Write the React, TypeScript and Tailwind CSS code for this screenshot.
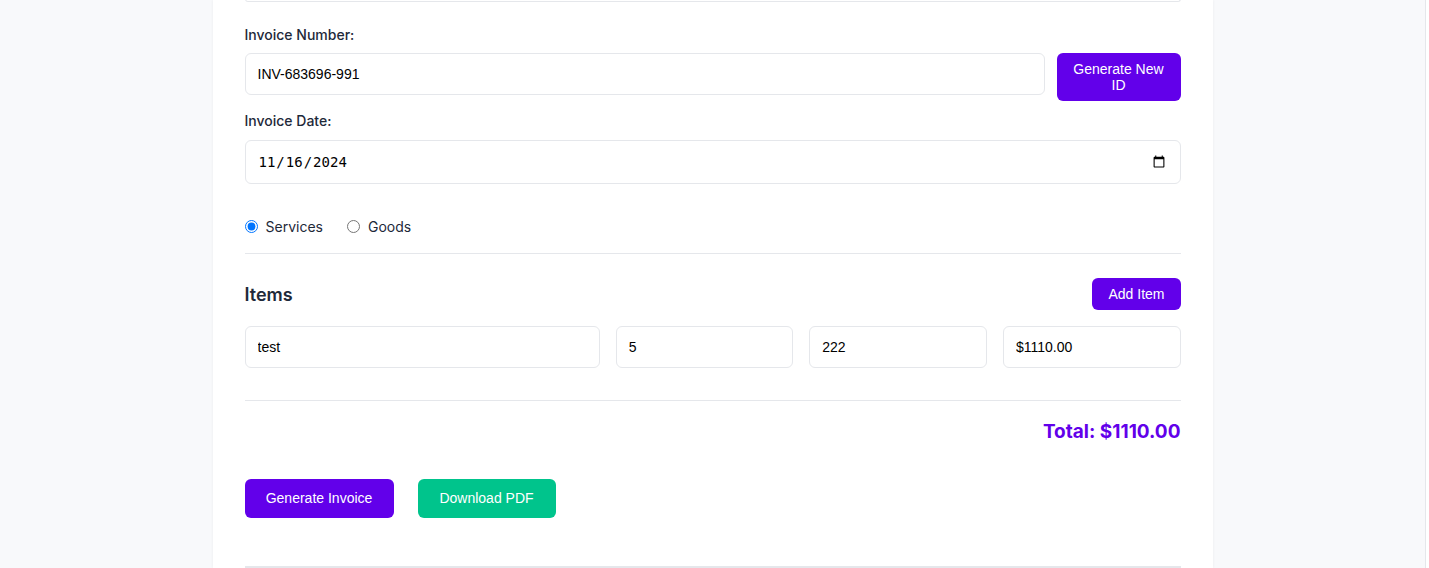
import { useState } from "react";

type Item = { description: string; quantity: string; price: string };

const inputClasses =
  "w-full rounded-md border border-gray-200 bg-white px-3 text-[14px] text-black outline-none font-['Liberation_Sans',Arial,sans-serif]";

function formatMoney(n: number): string {
  return `$${n.toFixed(2)}`;
}

export default function App() {
  const [invoiceNumber, setInvoiceNumber] = useState("INV-683696-991");
  const [invoiceDate, setInvoiceDate] = useState("2024-11-16");
  const [kind, setKind] = useState<"services" | "goods">("services");
  const [items, setItems] = useState<Item[]>([{ description: "test", quantity: "5", price: "222" }]);

  const total = items.reduce((sum, it) => sum + (Number(it.quantity) || 0) * (Number(it.price) || 0), 0);

  function updateItem(index: number, patch: Partial<Item>) {
    setItems((prev) => prev.map((it, i) => (i === index ? { ...it, ...patch } : it)));
  }

  function newId() {
    const a = Math.floor(100000 + Math.random() * 900000);
    const b = Math.floor(100 + Math.random() * 900);
    setInvoiceNumber(`INV-${a}-${b}`);
  }

  return (
    <div className="flex h-[568px] overflow-hidden font-['Inter',sans-serif]">
      <div className="flex flex-1 justify-center bg-[#f8f9fb]">
        <div className="w-[1000px] bg-white px-8 shadow-[0_0_3px_rgba(0,0,0,0.06)]">
          {/* tail of the field above */}
          <div className="-mt-px h-[3px] rounded-b-md border-x border-b border-gray-200" />

          {/* Invoice number */}
          <label className="mt-[23px] mb-2 block text-[14px] font-medium leading-5 text-gray-800">
            Invoice Number:
          </label>
          <div className="flex items-start gap-3">
            <input
              className={`${inputClasses} h-[42px]`}
              value={invoiceNumber}
              onChange={(e) => setInvoiceNumber(e.target.value)}
            />
            <button
              onClick={newId}
              className="h-12 w-[124px] shrink-0 rounded-md bg-[#6200ea] px-4 text-[14px] leading-4 text-white font-['Liberation_Sans',Arial,sans-serif]"
            >
              Generate New ID
            </button>
          </div>

          {/* Invoice date */}
          <label className="mt-[10px] mb-[9px] block text-[14px] font-medium leading-5 text-gray-800">
            Invoice Date:
          </label>
          <input
            type="date"
            className="h-[44px] w-full rounded-md border border-gray-200 bg-white px-3 text-[14px] text-black outline-none font-['DejaVu_Sans_Mono',monospace]"
            value={invoiceDate}
            onChange={(e) => setInvoiceDate(e.target.value)}
          />

          {/* Type */}
          <div className="mt-8 flex h-5 items-center gap-6 text-[14px] text-gray-800">
            <label className="flex items-center gap-2">
              <input
                type="radio"
                name="kind"
                className="m-0 h-[13px] w-[13px]"
                checked={kind === "services"}
                onChange={() => setKind("services")}
              />
              Services
            </label>
            <label className="flex items-center gap-2">
              <input
                type="radio"
                name="kind"
                className="m-0 h-[13px] w-[13px]"
                checked={kind === "goods"}
                onChange={() => setKind("goods")}
              />
              Goods
            </label>
          </div>

          <div className="mt-[17px] h-px bg-gray-200" />

          {/* Items */}
          <div className="mt-6 flex h-8 items-center justify-between">
            <h2 className="text-[18px] font-semibold text-gray-800">Items</h2>
            <button
              onClick={() => setItems((prev) => [...prev, { description: "", quantity: "", price: "" }])}
              className="h-8 rounded-md bg-[#6200ea] px-4 text-[14px] text-white font-['Liberation_Sans',Arial,sans-serif]"
            >
              Add Item
            </button>
          </div>

          <div className="mt-4 space-y-4">
            {items.map((it, i) => (
              <div key={i} className="grid grid-cols-[2fr_1fr_1fr_1fr] gap-4">
                <input
                  className={`${inputClasses} h-[42px]`}
                  value={it.description}
                  onChange={(e) => updateItem(i, { description: e.target.value })}
                />
                <input
                  className={`${inputClasses} h-[42px]`}
                  value={it.quantity}
                  onChange={(e) => updateItem(i, { quantity: e.target.value })}
                />
                <input
                  className={`${inputClasses} h-[42px]`}
                  value={it.price}
                  onChange={(e) => updateItem(i, { price: e.target.value })}
                />
                <input
                  className={`${inputClasses} h-[42px]`}
                  readOnly
                  value={formatMoney((Number(it.quantity) || 0) * (Number(it.price) || 0))}
                />
              </div>
            ))}
          </div>

          <div className="mt-8 h-px bg-gray-200" />

          <p className="mt-[17px] text-right text-[19px] font-bold leading-7 text-[#6200ea]">
            Total: {formatMoney(total)}
          </p>

          {/* Actions */}
          <div className="mt-[33px] flex gap-6">
            <button className="h-[39px] w-[149px] rounded-md bg-[#6200ea] text-[14px] text-white font-['Liberation_Sans',Arial,sans-serif]">
              Generate Invoice
            </button>
            <button className="h-[39px] w-[138px] rounded-md bg-[#00c48c] text-[14px] text-white font-['Liberation_Sans',Arial,sans-serif]">
              Download PDF
            </button>
          </div>

          <div className="mt-12 h-[2px] bg-gray-200" />
        </div>
      </div>
      {/* scrollbar edge */}
      <div className="w-1 shrink-0 border-l border-gray-200 bg-white" />
    </div>
  );
}
